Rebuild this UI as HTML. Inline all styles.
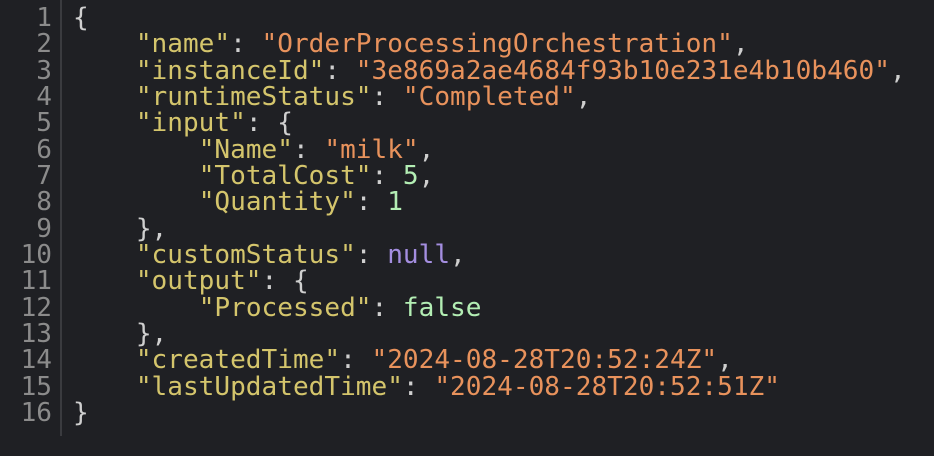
<!DOCTYPE html>
<html><head><style>
html,body{margin:0;padding:0;background:#1f2024;width:934px;height:456px;overflow:hidden}
.wrap{position:relative;padding-top:5px}
.g{position:absolute;left:60px;top:0;width:2px;height:436px;background:#3a3b3f}
.l{height:26.33px;line-height:26.33px;font-family:"DejaVu Sans Mono","Liberation Mono",monospace;font-size:26.1px;white-space:pre;color:#cfcfcf}
.n{display:inline-block;width:52px;text-align:right;color:#8b8b8b;margin-right:21px}
.k{color:#d4c56c}.s{color:#e8925c}.d{color:#b3eeb4}.u{color:#a48ee0}
</style></head><body><div class="wrap"><div class="g"></div>
<div class="l"><span class="n">1</span>{</div>
<div class="l"><span class="n">2</span>    <span class="k">"name"</span>: <span class="s">"OrderProcessingOrchestration"</span>,</div>
<div class="l"><span class="n">3</span>    <span class="k">"instanceId"</span>: <span class="s">"3e869a2ae4684f93b10e231e4b10b460"</span>,</div>
<div class="l"><span class="n">4</span>    <span class="k">"runtimeStatus"</span>: <span class="s">"Completed"</span>,</div>
<div class="l"><span class="n">5</span>    <span class="k">"input"</span>: {</div>
<div class="l"><span class="n">6</span>        <span class="k">"Name"</span>: <span class="s">"milk"</span>,</div>
<div class="l"><span class="n">7</span>        <span class="k">"TotalCost"</span>: <span class="d">5</span>,</div>
<div class="l"><span class="n">8</span>        <span class="k">"Quantity"</span>: <span class="d">1</span></div>
<div class="l"><span class="n">9</span>    },</div>
<div class="l"><span class="n">10</span>    <span class="k">"customStatus"</span>: <span class="u">null</span>,</div>
<div class="l"><span class="n">11</span>    <span class="k">"output"</span>: {</div>
<div class="l"><span class="n">12</span>        <span class="k">"Processed"</span>: <span class="d">false</span></div>
<div class="l"><span class="n">13</span>    },</div>
<div class="l"><span class="n">14</span>    <span class="k">"createdTime"</span>: <span class="s">"2024-08-28T20:52:24Z"</span>,</div>
<div class="l"><span class="n">15</span>    <span class="k">"lastUpdatedTime"</span>: <span class="s">"2024-08-28T20:52:51Z"</span></div>
<div class="l"><span class="n">16</span>}</div>
</div></body></html>
